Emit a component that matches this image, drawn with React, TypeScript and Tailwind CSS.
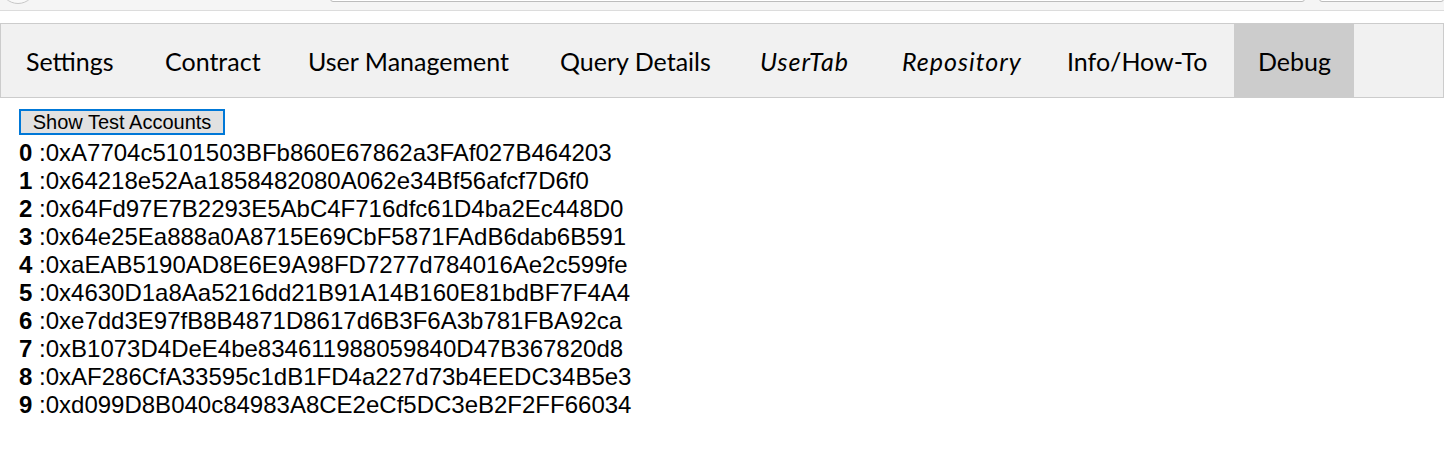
import React from "react";

const tabs = [
  { label: "Settings", w: "w-[139px]" },
  { label: "Contract", w: "w-[143px]" },
  { label: "User Management", w: "w-[252px]" },
  { label: "Query Details", w: "w-[200px]" },
  { label: "UserTab", w: "w-[142px]", italic: true },
  { label: "Repository", w: "w-[165px]", italic: true },
  { label: "Info/How-To", w: "w-[191px]" },
  { label: "Debug", w: "w-[120px]", active: true },
];

const accounts = [
  "0xA7704c5101503BFb860E67862a3FAf027B464203",
  "0x64218e52Aa1858482080A062e34Bf56afcf7D6f0",
  "0x64Fd97E7B2293E5AbC4F716dfc61D4ba2Ec448D0",
  "0x64e25Ea888a0A8715E69CbF5871FAdB6dab6B591",
  "0xaEAB5190AD8E6E9A98FD7277d784016Ae2c599fe",
  "0x4630D1a8Aa5216dd21B91A14B160E81bdBF7F4A4",
  "0xe7dd3E97fB8B4871D8617d6B3F6A3b781FBA92ca",
  "0xB1073D4DeE4be834611988059840D47B367820d8",
  "0xAF286CfA33595c1dB1FD4a227d73b4EEDC34B5e3",
  "0xd099D8B040c84983A8CE2eCf5DC3eB2F2FF66034",
];

function BrowserStrip() {
  return (
    <div className="h-[11px] bg-[#f5f5f5] border-b border-[#dcdcdc] flex items-start overflow-hidden">
      <div className="w-[36px] h-[36px] -mt-[32px] rounded-full border border-[#c8c8c8] bg-[#f9f9f9] shrink-0" />
      <div className="ml-[294px] w-[975px] h-[4px] -mt-[2px] rounded-b-[3px] border border-[#bdbdbd] bg-white shrink-0" />
      <div className="ml-[14px] flex-1 h-[4px] -mt-[2px] rounded-b-[3px] border border-[#bdbdbd] bg-white" />
    </div>
  );
}

function TabBar() {
  return (
    <div className="mt-[12px] flex border border-[#cccccc] bg-[#f1f1f1] h-[75px] pl-[1px]">
      {tabs.map((t) => (
        <div
          key={t.label}
          className={`${t.w} h-full flex items-center pl-[24px] pt-[2px] text-[25px] text-black ${
            t.italic ? "italic tracking-[1px]" : ""
          } ${t.active ? "bg-[#cccccc]" : ""}`}
          style={{ fontFamily: "Lato, 'DejaVu Sans', sans-serif" }}
        >
          {t.label}
        </div>
      ))}
    </div>
  );
}

export default function App() {
  return (
    <div className="w-[1444px] h-[470px] bg-white overflow-hidden">
      <BrowserStrip />
      <TabBar />
      <div className="pl-[19px] pt-[11px]" style={{ fontFamily: "'Liberation Sans', Arial, sans-serif" }}>
        <button className="w-[206px] h-[26px] border-2 border-[#0078d7] bg-[#e1e1e1] text-[20px] leading-none text-black flex items-center justify-center">
          Show Test Accounts
        </button>
        <div className="mt-[4px] text-[24px] leading-[28px] text-black">
          {accounts.map((a, i) => (
            <div key={a}>
              <b>{i}</b> :{a}
            </div>
          ))}
        </div>
      </div>
    </div>
  );
}
